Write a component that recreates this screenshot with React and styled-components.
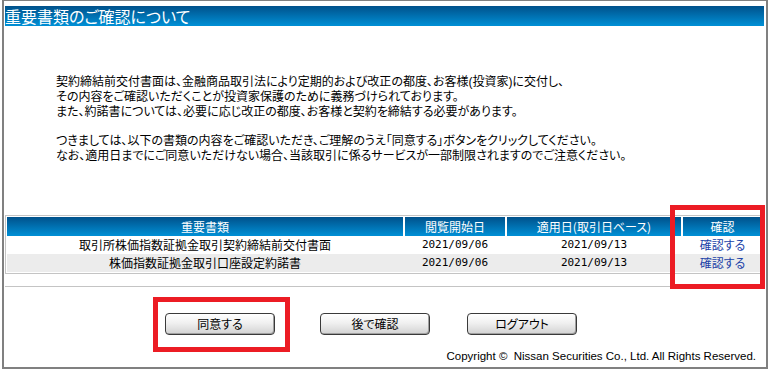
import React from "react";
import styled, { createGlobalStyle } from "styled-components";

const Global = createGlobalStyle`
  html, body { margin: 0; padding: 0; background: #fff; }
  body { font-family: "Noto Sans CJK JP", "Liberation Sans", sans-serif; color: #000; }
`;

const Page = styled.div`
  position: relative;
  width: 768px;
  height: 369px;
  overflow: hidden;
`;

const Frame = styled.div`
  box-sizing: border-box;
  margin-left: 2px;
  width: 766px;
  height: 369px;
  border: 2px solid #808080;
  border-top-width: 1px;
  padding: 5px 2px 0 1px;
  display: flex;
  flex-direction: column;
`;

const TitleBar = styled.div`
  height: 20px;
  background: linear-gradient(#00518b, #0090d6);
  color: #fff;
  font-size: 16px;
  line-height: 20px;
  white-space: nowrap;
  font-feature-settings: "palt";
`;

const Notice = styled.div`
  margin: 49px 0 0 51px;
  display: flex;
  flex-direction: column;
  font-family: "Liberation Sans", "Noto Sans CJK JP", sans-serif;
  font-size: 12px;
  white-space: nowrap;
  font-feature-settings: "palt";
`;

const NoticeLine = styled.div`
  height: ${(p) => (p.$blank ? 14 : 15)}px;
  line-height: 15px;
`;

const DocTable = styled.div`
  margin-top: 51px;
  border: 1px solid #c4c4c4;
  padding: 1px;
  display: flex;
  flex-direction: column;
`;

const Row = styled.div`
  display: grid;
  grid-template-columns: 396px 100px 174px 79px;
  column-gap: 2px;
  height: ${(p) => (p.$head ? 19 : 18)}px;
  background: ${(p) => (p.$shade ? "#ececec" : "#fff")};
`;

const HeadCell = styled.div`
  background: linear-gradient(#00518b, #0090d6);
  color: #fff;
  font-size: 12px;
  line-height: 19px;
  text-align: center;
  white-space: nowrap;
  font-feature-settings: "palt";
`;

const Cell = styled.div`
  line-height: 18px;
  text-align: center;
  white-space: nowrap;
  font-feature-settings: "palt";
  font-family: ${(p) => (p.$mono ? '"DejaVu Sans Mono", "Liberation Mono", monospace' : "inherit")};
  font-size: ${(p) => (p.$mono ? "11px" : "12px")};
`;

const ConfirmLink = styled.a`
  color: #2142a8;
  text-decoration: none;
  cursor: pointer;
`;

const Rule = styled.div`
  margin-top: 12px;
  height: 1px;
  background: #c4c4c4;
`;

const ButtonRow = styled.div`
  margin-top: 26px;
  padding-left: 160px;
  display: grid;
  grid-template-columns: 155px 147px auto;
`;

const Button = styled.button`
  box-sizing: border-box;
  width: 110px;
  height: 22px;
  padding: 0;
  border: 1px solid #3a3a3a;
  border-radius: 4px;
  background: linear-gradient(#ffffff, #f0f0f0 45%, #d2d2d2);
  box-shadow: inset -1px -1px 0 #a0a0a0;
  font-family: "Noto Sans CJK JP", sans-serif;
  font-size: 12px;
  line-height: 18px;
  color: #000;
  font-feature-settings: "palt";
`;

const Copyright = styled.div`
  margin-top: 14px;
  padding-right: 8px;
  text-align: right;
  font-family: "Liberation Sans", sans-serif;
  font-size: 11.5px;
  line-height: 14px;
  white-space: nowrap;
`;

const Highlight = styled.div`
  position: absolute;
  box-sizing: border-box;
  border: 5px solid #ec1c24;
  left: ${(p) => p.$x}px;
  top: ${(p) => p.$y}px;
  width: ${(p) => p.$w}px;
  height: ${(p) => p.$h}px;
  pointer-events: none;
`;

const docs = [
  { name: "取引所株価指数証拠金取引契約締結前交付書面", start: "2021/09/06", apply: "2021/09/13" },
  { name: "株価指数証拠金取引口座設定約諾書", start: "2021/09/06", apply: "2021/09/13" },
];

const notice = [
  "契約締結前交付書面は、金融商品取引法により定期的および改正の都度、お客様(投資家)に交付し、",
  "その内容をご確認いただくことが投資家保護のために義務づけられております。",
  "また、約諾書については、必要に応じ改正の都度、お客様と契約を締結する必要があります。",
  "",
  "つきましては、以下の書類の内容をご確認いただき、ご理解のうえ「同意する」ボタンをクリックしてください。",
  "なお、適用日までにご同意いただけない場合、当該取引に係るサービスが一部制限されますのでご注意ください。",
];

export default function App() {
  return (
    <Page>
      <Global />
      <Frame>
        <TitleBar>重要書類のご確認について</TitleBar>
        <Notice>
          {notice.map((line, i) => (
            <NoticeLine key={i} $blank={line === ""}>
              {line}
            </NoticeLine>
          ))}
        </Notice>
        <DocTable>
          <Row $head>
            <HeadCell>重要書類</HeadCell>
            <HeadCell>閲覧開始日</HeadCell>
            <HeadCell>適用日(取引日ベース)</HeadCell>
            <HeadCell>確認</HeadCell>
          </Row>
          {docs.map((d, i) => (
            <Row key={d.name} $shade={i % 2 === 1}>
              <Cell>{d.name}</Cell>
              <Cell $mono>{d.start}</Cell>
              <Cell $mono>{d.apply}</Cell>
              <Cell>
                <ConfirmLink>確認する</ConfirmLink>
              </Cell>
            </Row>
          ))}
        </DocTable>
        <Rule />
        <ButtonRow>
          <Button>同意する</Button>
          <Button>後で確認</Button>
          <Button>ログアウト</Button>
        </ButtonRow>
        <Copyright>Copyright ©&nbsp; Nissan Securities Co., Ltd. All Rights Reserved.</Copyright>
      </Frame>
      <Highlight $x={670} $y={205} $w={95} $h={84} />
      <Highlight $x={153} $y={297} $w={137} $h={55} />
    </Page>
  );
}
